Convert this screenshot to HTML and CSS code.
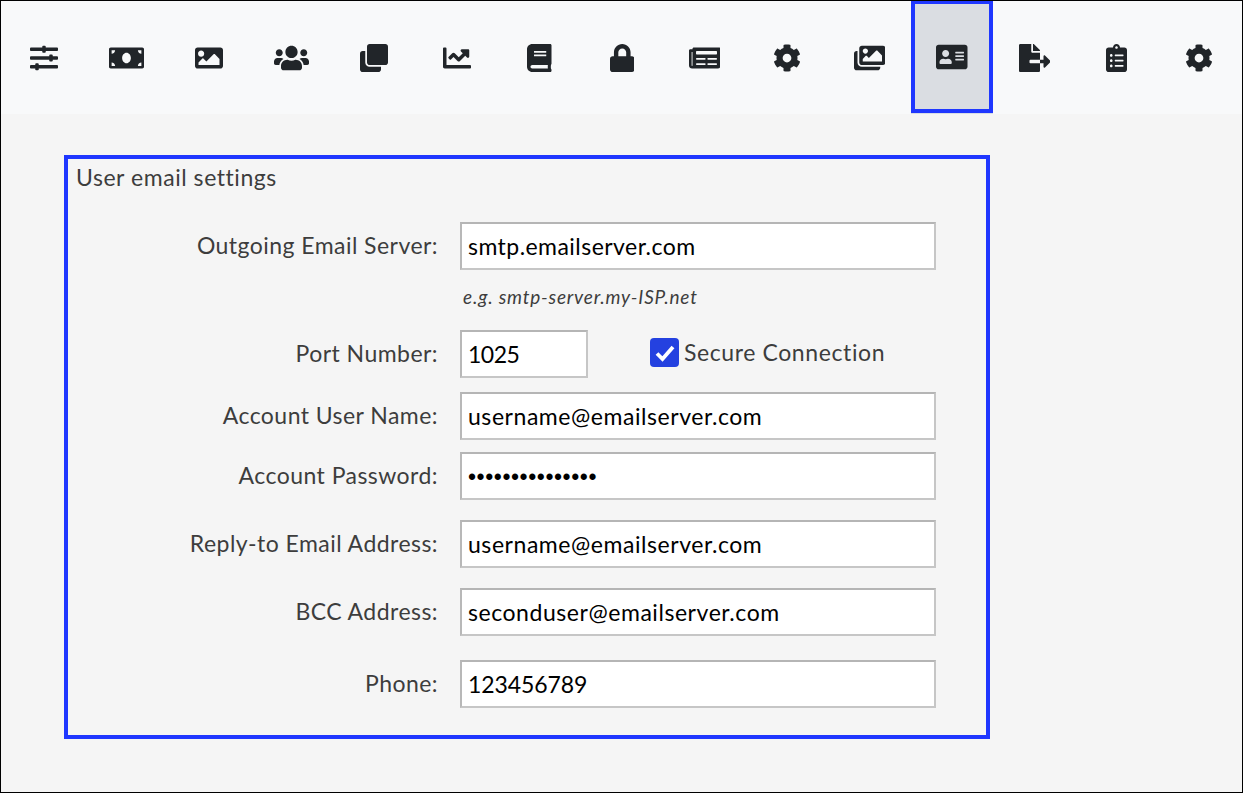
FILE: index.html
```html
<!DOCTYPE html>
<html lang="en">
<head>
<meta charset="utf-8">
<title>User email settings</title>
<link rel="stylesheet" href="styles.css">
</head>
<body>
<div class="frame">
<nav class="toolbar">
<a class="tool"><svg class="ico" width="28" height="28" viewBox="0 0 512 512"><path d="M496 384H160v-16c0-8.8-7.2-16-16-16h-32c-8.8 0-16 7.2-16 16v16H16c-8.8 0-16 7.2-16 16v32c0 8.8 7.2 16 16 16h80v16c0 8.8 7.2 16 16 16h32c8.800 0 16-7.200 16-16v-16h336c8.800 0 16-7.200 16-16v-32c0-8.800-7.200-16-16-16zm0-160h-80v-16c0-8.800-7.200-16-16-16h-32c-8.800 0-16 7.200-16 16v16H16c-8.800 0-16 7.200-16 16v32c0 8.800 7.200 16 16 16h336v16c0 8.800 7.200 16 16 16h32c8.800 0 16-7.200 16-16v-16h80c8.800 0 16-7.200 16-16v-32c0-8.800-7.200-16-16-16zm0-160H288V48c0-8.800-7.200-16-16-16h-32c-8.800 0-16 7.200-16 16v16H16C7.200 64 0 71.200 0 80v32c0 8.800 7.200 16 16 16h208v16c0 8.800 7.200 16 16 16h32c8.800 0 16-7.200 16-16v-16h208c8.800 0 16-7.200 16-16V80c0-8.800-7.200-16-16-16z"/></svg></a>
<a class="tool"><svg class="ico" width="35" height="28" viewBox="0 0 640 512"><path d="M608 64H32C14.33 64 0 78.33 0 96v320c0 17.670 14.330 32 32 32h576c17.670 0 32-14.330 32-32V96c0-17.670-14.330-32-32-32zM48 400v-64c35.350 0 64 28.650 64 64H48zm0-224v-64h64c0 35.350-28.650 64-64 64zm272 176c-44.190 0-80-42.990-80-96 0-53.020 35.820-96 80-96s80 42.980 80 96c0 53.030-35.830 96-80 96zm272 48h-64c0-35.350 28.650-64 64-64v64zm0-224c-35.350 0-64-28.650-64-64h64v64z"/></svg></a>
<a class="tool"><svg class="ico" width="28" height="28" viewBox="0 0 512 512"><path d="M464 448H48c-26.510 0-48-21.490-48-48V112c0-26.510 21.490-48 48-48h416c26.510 0 48 21.490 48 48v288c0 26.510-21.490 48-48 48zM112 120c-30.928 0-56 25.072-56 56s25.072 56 56 56 56-25.072 56-56-25.072-56-56-56zM64 384h384V272l-87.515-87.515c-4.686-4.686-12.284-4.686-16.971 0L208 320l-55.515-55.515c-4.686-4.686-12.284-4.686-16.971 0L64 336v48z"/></svg></a>
<a class="tool"><svg class="ico" width="35" height="28" viewBox="0 0 640 512"><path d="M96 224c35.300 0 64-28.700 64-64s-28.700-64-64-64-64 28.700-64 64 28.700 64 64 64zm448 0c35.300 0 64-28.700 64-64s-28.700-64-64-64-64 28.700-64 64 28.700 64 64 64zm32 32h-64c-17.600 0-33.500 7.100-45.100 18.600 40.300 22.100 68.900 62 75.100 109.400h66c17.700 0 32-14.300 32-32v-32c0-35.300-28.700-64-64-64zm-256 0c61.900 0 112-50.100 112-112S381.900 32 320 32 208 82.100 208 144s50.100 112 112 112zm76.800 32h-8.300c-20.800 10-43.900 16-68.500 16s-47.600-6-68.500-16h-8.300C179.600 288 128 339.600 128 403.200V432c0 26.500 21.500 48 48 48h288c26.500 0 48-21.500 48-48v-28.800c0-63.600-51.600-115.200-115.200-115.200zm-223.700-13.400C161.500 263.100 145.600 256 128 256H64c-35.300 0-64 28.700-64 64v32c0 17.700 14.300 32 32 32h65.900c6.300-47.400 34.900-87.300 75.200-109.400z"/></svg></a>
<a class="tool"><svg class="ico" width="28" height="28" viewBox="0 0 512 512"><path d="M464 0c26.510 0 48 21.490 48 48v288c0 26.510-21.490 48-48 48H176c-26.510 0-48-21.490-48-48V48c0-26.510 21.490-48 48-48h288M176 416c-44.112 0-80-35.888-80-80V128H48c-26.510 0-48 21.490-48 48v288c0 26.510 21.490 48 48 48h288c26.510 0 48-21.490 48-48v-48H176z"/></svg></a>
<a class="tool"><svg class="ico" width="28" height="28" viewBox="0 0 512 512"><path d="M496 384H64V80c0-8.840-7.160-16-16-16H16C7.160 64 0 71.160 0 80v336c0 17.670 14.330 32 32 32h464c8.840 0 16-7.160 16-16v-32c0-8.840-7.160-16-16-16zM464 96H345.940c-21.380 0-32.090 25.850-16.970 40.970l32.400 32.400L288 242.750l-73.370-73.370c-12.500-12.500-32.760-12.500-45.250 0l-68.690 68.690c-6.250 6.250-6.250 16.380 0 22.630l22.620 22.620c6.250 6.250 16.380 6.250 22.630 0L192 237.250l73.370 73.370c12.500 12.500 32.760 12.500 45.250 0l96-96 32.400 32.400c15.120 15.120 40.970 4.410 40.970-16.970V112c.01-8.840-7.150-16-15.990-16z"/></svg></a>
<a class="tool"><svg class="ico" width="24.500" height="28" viewBox="0 0 448 512"><path d="M448 360V24c0-13.300-10.700-24-24-24H96C43 0 0 43 0 96v320c0 53 43 96 96 96h328c13.300 0 24-10.700 24-24v-16c0-7.500-3.500-14.300-8.900-18.700-4.200-15.400-4.200-59.300 0-74.700 5.400-4.300 8.900-11.100 8.900-18.600zM128 134c0-3.300 2.700-6 6-6h212c3.300 0 6 2.700 6 6v20c0 3.300-2.700 6-6 6H134c-3.300 0-6-2.700-6-6v-20zm0 64c0-3.300 2.700-6 6-6h212c3.300 0 6 2.700 6 6v20c0 3.300-2.700 6-6 6H134c-3.300 0-6-2.700-6-6v-20zm253.400 250H96c-17.700 0-32-14.300-32-32 0-17.600 14.400-32 32-32h285.400c-1.900 17.100-1.900 46.900 0 64z"/></svg></a>
<a class="tool"><svg class="ico" width="24.500" height="28" viewBox="0 0 448 512"><path d="M400 224h-24v-72C376 68.200 307.800 0 224 0S72 68.200 72 152v72H48c-26.500 0-48 21.500-48 48v192c0 26.500 21.500 48 48 48h352c26.500 0 48-21.500 48-48V272c0-26.500-21.500-48-48-48zm-104 0H152v-72c0-39.700 32.300-72 72-72s72 32.300 72 72v72z"/></svg></a>
<a class="tool"><svg class="ico" width="31.500" height="28" viewBox="0 0 576 512"><path d="M552 64H88c-13.255 0-24 10.745-24 24v8H24c-13.255 0-24 10.745-24 24v272c0 30.928 25.072 56 56 56h472c26.510 0 48-21.490 48-48V88c0-13.255-10.745-24-24-24zM56 400a8 8 0 0 1-8-8V144h16v248a8 8 0 0 1-8 8zm236-16H140c-6.627 0-12-5.373-12-12v-8c0-6.627 5.373-12 12-12h152c6.627 0 12 5.373 12 12v8c0 6.627-5.373 12-12 12zm208 0H348c-6.627 0-12-5.373-12-12v-8c0-6.627 5.373-12 12-12h152c6.627 0 12 5.373 12 12v8c0 6.627-5.373 12-12 12zm-208-96H140c-6.627 0-12-5.373-12-12v-8c0-6.627 5.373-12 12-12h152c6.627 0 12 5.373 12 12v8c0 6.627-5.373 12-12 12zm208 0H348c-6.627 0-12-5.373-12-12v-8c0-6.627 5.373-12 12-12h152c6.627 0 12 5.373 12 12v8c0 6.627-5.373 12-12 12zm0-96H140c-6.627 0-12-5.373-12-12v-40c0-6.627 5.373-12 12-12h360c6.627 0 12 5.373 12 12v40c0 6.627-5.373 12-12 12z"/></svg></a>
<a class="tool"><svg class="ico" width="28" height="28" viewBox="0 0 512 512"><path d="M487.400 315.700l-42.600-24.600c4.300-23.200 4.300-47 0-70.200l42.600-24.600c4.900-2.800 7.100-8.600 5.500-14-11.100-35.600-30-67.800-54.700-94.600-3.800-4.100-10-5.100-14.800-2.300L380.800 110c-17.900-15.400-38.500-27.300-60.800-35.100V25.800c0-5.600-3.900-10.500-9.400-11.700-36.700-8.200-74.300-7.800-109.200 0-5.500 1.200-9.400 6.100-9.400 11.700V75c-22.200 7.900-42.800 19.800-60.800 35.100L88.700 85.500c-4.900-2.800-11-1.900-14.800 2.300-24.700 26.700-43.600 58.900-54.700 94.600-1.700 5.400.6 11.200 5.500 14L67.300 221c-4.300 23.200-4.300 47 0 70.200l-42.600 24.600c-4.900 2.800-7.100 8.600-5.500 14 11.100 35.600 30 67.800 54.700 94.600 3.800 4.100 10 5.100 14.800 2.300l42.600-24.600c17.900 15.400 38.500 27.300 60.800 35.100v49.200c0 5.600 3.900 10.500 9.400 11.700 36.700 8.200 74.300 7.800 109.200 0 5.500-1.200 9.400-6.100 9.400-11.700v-49.200c22.200-7.900 42.800-19.800 60.800-35.100l42.600 24.600c4.900 2.800 11 1.900 14.800-2.300 24.700-26.700 43.600-58.900 54.700-94.600 1.500-5.500-.7-11.300-5.600-14.100zM256 336c-44.100 0-80-35.900-80-80s35.900-80 80-80 80 35.900 80 80-35.900 80-80 80z"/></svg></a>
<a class="tool"><svg class="ico" width="31.500" height="28" viewBox="0 0 576 512"><path d="M480 416v16c0 26.510-21.490 48-48 48H48c-26.510 0-48-21.490-48-48V176c0-26.510 21.490-48 48-48h16v208c0 44.112 35.888 80 80 80h336zm96-80V80c0-26.510-21.490-48-48-48H144c-26.510 0-48 21.490-48 48v256c0 26.510 21.490 48 48 48h384c26.510 0 48-21.490 48-48zM256 128c0 26.510-21.490 48-48 48s-48-21.490-48-48 21.490-48 48-48 48 21.490 48 48zm-96 144l55.515-55.515c4.686-4.686 12.284-4.686 16.971 0L272 256l135.515-135.515c4.686-4.686 12.284-4.686 16.971 0L512 208v112H160v-48z"/></svg></a>
<a class="tool tool-active"><svg class="ico" width="31.500" height="28" viewBox="0 0 576 512"><path d="M528 32H48C21.500 32 0 53.500 0 80v352c0 26.500 21.500 48 48 48h480c26.500 0 48-21.500 48-48V80c0-26.500-21.500-48-48-48zm-352 96c35.300 0 64 28.700 64 64s-28.700 64-64 64-64-28.700-64-64 28.700-64 64-64zm112 236.800c0 10.600-10 19.200-22.400 19.200H86.400C74 384 64 375.400 64 364.800v-19.200c0-31.800 30.100-57.600 67.200-57.600h5c12.300 5.100 25.700 8 39.800 8s27.600-2.900 39.800-8h5c37.100 0 67.200 25.800 67.200 57.600v19.200zM512 312c0 4.400-3.600 8-8 8H360c-4.400 0-8-3.600-8-8v-16c0-4.400 3.600-8 8-8h144c4.400 0 8 3.600 8 8v16zm0-64c0 4.400-3.600 8-8 8H360c-4.400 0-8-3.600-8-8v-16c0-4.400 3.600-8 8-8h144c4.400 0 8 3.600 8 8v16zm0-64c0 4.400-3.600 8-8 8H360c-4.400 0-8-3.600-8-8v-16c0-4.400 3.600-8 8-8h144c4.400 0 8 3.600 8 8v16z"/></svg></a>
<a class="tool"><svg class="ico" width="31.500" height="28" viewBox="0 0 576 512"><path d="M384 121.900c0-6.300-2.500-12.400-7-16.900L279.100 7c-4.500-4.500-10.600-7-17-7H256v128h128zM571 308l-95.700-96.400c-10.100-10.100-27.400-3-27.400 11.300V288h-64v64h64v65.200c0 14.300 17.300 21.400 27.400 11.300L571 332c6.600-6.600 6.600-17.400 0-24zm-379 28v-32c0-8.800 7.200-16 16-16h176V160H248c-13.200 0-24-10.800-24-24V0H24C10.700 0 0 10.700 0 24v464c0 13.300 10.700 24 24 24h336c13.300 0 24-10.700 24-24V352H208c-8.800 0-16-7.200-16-16z"/></svg></a>
<a class="tool"><svg class="ico" width="21" height="28" viewBox="0 0 384 512"><path d="M336 64h-80c0-35.300-28.700-64-64-64s-64 28.700-64 64H48C21.500 64 0 85.500 0 112v352c0 26.500 21.500 48 48 48h288c26.500 0 48-21.500 48-48V112c0-26.500-21.500-48-48-48zM96 424c-13.300 0-24-10.700-24-24s10.700-24 24-24 24 10.700 24 24-10.700 24-24 24zm0-96c-13.300 0-24-10.700-24-24s10.700-24 24-24 24 10.700 24 24-10.700 24-24 24zm0-96c-13.300 0-24-10.700-24-24s10.700-24 24-24 24 10.700 24 24-10.700 24-24 24zm96-192c13.300 0 24 10.700 24 24s-10.700 24-24 24-24-10.700-24-24 10.700-24 24-24zm128 368c0 4.400-3.600 8-8 8H168c-4.400 0-8-3.600-8-8v-16c0-4.400 3.600-8 8-8h144c4.400 0 8 3.600 8 8v16zm0-96c0 4.400-3.600 8-8 8H168c-4.400 0-8-3.600-8-8v-16c0-4.400 3.600-8 8-8h144c4.400 0 8 3.600 8 8v16zm0-96c0 4.400-3.600 8-8 8H168c-4.400 0-8-3.600-8-8v-16c0-4.400 3.600-8 8-8h144c4.400 0 8 3.600 8 8v16z"/></svg></a>
<a class="tool"><svg class="ico" width="28" height="28" viewBox="0 0 512 512"><path d="M487.400 315.700l-42.600-24.600c4.300-23.200 4.300-47 0-70.200l42.600-24.600c4.900-2.800 7.100-8.600 5.500-14-11.100-35.600-30-67.800-54.700-94.600-3.800-4.100-10-5.100-14.800-2.300L380.800 110c-17.900-15.400-38.500-27.300-60.800-35.100V25.800c0-5.600-3.900-10.500-9.400-11.700-36.700-8.200-74.300-7.800-109.200 0-5.500 1.200-9.400 6.100-9.400 11.700V75c-22.200 7.900-42.800 19.800-60.800 35.100L88.700 85.500c-4.900-2.800-11-1.900-14.800 2.300-24.700 26.700-43.600 58.900-54.700 94.600-1.700 5.400.6 11.200 5.500 14L67.300 221c-4.300 23.200-4.300 47 0 70.200l-42.600 24.600c-4.900 2.800-7.100 8.600-5.500 14 11.100 35.600 30 67.800 54.700 94.600 3.800 4.100 10 5.100 14.800 2.300l42.600-24.600c17.900 15.400 38.500 27.300 60.800 35.100v49.200c0 5.600 3.900 10.500 9.400 11.700 36.700 8.200 74.300 7.800 109.200 0 5.500-1.200 9.400-6.100 9.400-11.700v-49.200c22.200-7.900 42.800-19.800 60.800-35.100l42.600 24.600c4.900 2.800 11 1.900 14.800-2.300 24.700-26.700 43.600-58.900 54.700-94.600 1.500-5.500-.7-11.300-5.600-14.100zM256 336c-44.100 0-80-35.900-80-80s35.900-80 80-80 80 35.900 80 80-35.900 80-80 80z"/></svg></a>
</nav>
<main class="panel">
<h1 class="panel-title">User email settings</h1>
<div class="field field-server">
<label class="field-label">Outgoing Email Server:</label>
<input class="text-input" type="text" value="smtp.emailserver.com">
</div>
<p class="hint">e.g. smtp-server.my-ISP.net</p>
<div class="field field-port">
<label class="field-label">Port Number:</label>
<input class="text-input port-input" type="text" value="1025">
<span class="secure">
<span class="check"><svg width="22" height="20" viewBox="0 0 22 20"><path d="M3 10.500l5.500 5.500L19 4" fill="none" stroke="#fff" stroke-width="3.800"/></svg></span>
<span class="secure-label">Secure Connection</span>
</span>
</div>
<div class="field field-user">
<label class="field-label">Account User Name:</label>
<input class="text-input email-input" type="text" value="username@emailserver.com">
</div>
<div class="field field-pass">
<label class="field-label">Account Password:</label>
<input class="text-input pass-input" type="password" value="123456789012345">
</div>
<div class="field field-reply">
<label class="field-label">Reply-to Email Address:</label>
<input class="text-input email-input" type="text" value="username@emailserver.com">
</div>
<div class="field field-bcc">
<label class="field-label">BCC Address:</label>
<input class="text-input email-input" type="text" value="seconduser@emailserver.com">
</div>
<div class="field field-phone">
<label class="field-label">Phone:</label>
<input class="text-input phone-input" type="text" value="123456789">
</div>
</main>
</div>
</body>
</html>
```
FILE: styles.css
```css
* { box-sizing: border-box; }
html, body { margin: 0; height: 100%; }
body { font-family: "Lato", "Liberation Sans", sans-serif; background: #f5f5f5; letter-spacing: .45px; }
.frame { height: 793px; border: 1px solid #000; background: #f5f5f5; overflow: hidden; }
.toolbar { display: flex; height: 113px; padding-left: 2px; background: #f8f9fa; }
.tool { flex: 0 0 82.530px; display: flex; align-items: center; justify-content: center; }
.tool-active { margin-bottom: 1px; background: #dadde2; border: 4px solid #1f37ff; border-top-width: 3px; box-shadow: 0 1px 0 #d8dde6; }
.ico { display: block; fill: #212529; }
.panel { width: 926px; height: 584px; margin: 41px 0 0 63px; border: 4px solid #1f37ff; padding: 0 0 0 8px; }
.panel-title { margin: 5px 0 0; font-size: 23px; line-height: 26px; font-weight: 400; letter-spacing: .55px; color: #3d3d3d; }
.field { display: flex; align-items: center; height: 48px; }
.field-label { flex: 0 0 362px; margin: 0 22px 2px 0; text-align: right; font-size: 23px; color: #3d3d3d; }
.text-input { width: 476px; height: 48px; padding: 0 6px; border: 2px solid #c6c6c6; border-top-color: #b5b5b5; border-left-color: #b8b8b8; border-radius: 0; background: #fff; color: #000; font: 400 23px "Lato", "Liberation Sans", sans-serif; letter-spacing: .45px; outline: none; }
.port-input { width: 128px; letter-spacing: -.5px; }
.email-input { letter-spacing: .55px; }
.phone-input { letter-spacing: -.1px; }
.pass-input { padding-top: 3px; font-family: "Liberation Sans", sans-serif; letter-spacing: .55px; }
.field-server { margin-top: 32px; }
.hint { margin: 15px 0 0 387px; height: 24px; font-size: 19px; line-height: 24px; font-style: italic; color: #3d3d3d; letter-spacing: .8px; }
.field-port { margin-top: 21px; }
.field-user { margin-top: 14px; }
.field-pass { margin-top: 12px; }
.field-reply { margin-top: 20px; }
.field-bcc { margin-top: 20px; }
.field-phone { margin-top: 24px; }
.secure { display: flex; align-items: center; margin: 0 0 3px 62px; }
.check { display: flex; align-items: center; justify-content: center; width: 29px; height: 29px; border-radius: 4px; background: #2441e0; }
.secure-label { margin: 0 0 2px 5px; font-size: 23px; letter-spacing: .6px; color: #3d3d3d; }
```
